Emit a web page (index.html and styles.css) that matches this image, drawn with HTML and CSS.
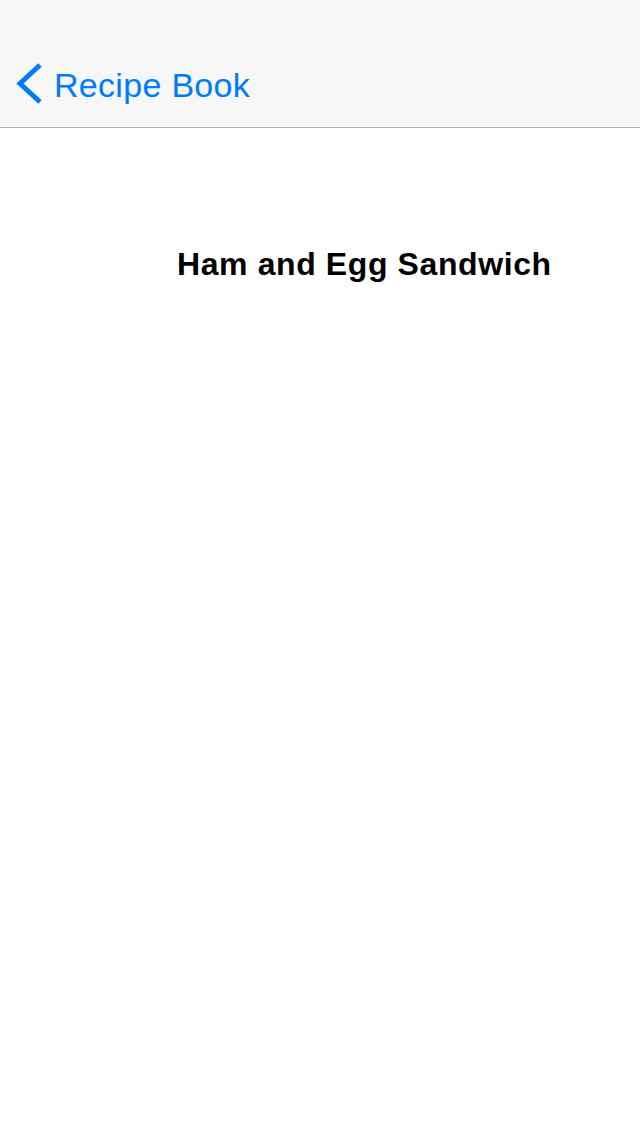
FILE: index.html
```html
<!DOCTYPE html>
<html>
<head>
<meta charset="utf-8">
<link rel="stylesheet" href="styles.css">
</head>
<body>
<header class="navbar">
  <svg class="back-chevron" width="30" height="44" viewBox="0 0 30 44">
    <polyline points="26,4 6,22.5 26,41" fill="none" stroke="#007aff" stroke-width="5" stroke-linejoin="miter"/>
  </svg>
  <span class="back-label">Recipe Book</span>
</header>
<main class="content">
  <h1 class="recipe-title">Ham and Egg Sandwich</h1>
</main>
</body>
</html>
```
FILE: styles.css
```css
html, body {
  margin: 0;
  padding: 0;
  background: #ffffff;
}
body {
  width: 640px;
  height: 1136px;
  font-family: "Liberation Sans", Arial, sans-serif;
}
.navbar {
  box-sizing: border-box;
  height: 128px;
  padding: 61px 0 0 14px;
  background: #f7f7f7;
  border-bottom: 1px solid #b2b2b2;
  display: flex;
  align-items: flex-start;
  gap: 10px;
}
.back-chevron {
  display: block;
  flex: none;
}
.back-label {
  margin-top: 4px;
  font-size: 34px;
  line-height: 40px;
  letter-spacing: 0.3px;
  color: #007aff;
}
.content {
  padding: 116px 0 0 177px;
}
.recipe-title {
  margin: 0;
  font-size: 32px;
  line-height: 40px;
  font-weight: bold;
  letter-spacing: 0.6px;
  color: #000000;
}
```
